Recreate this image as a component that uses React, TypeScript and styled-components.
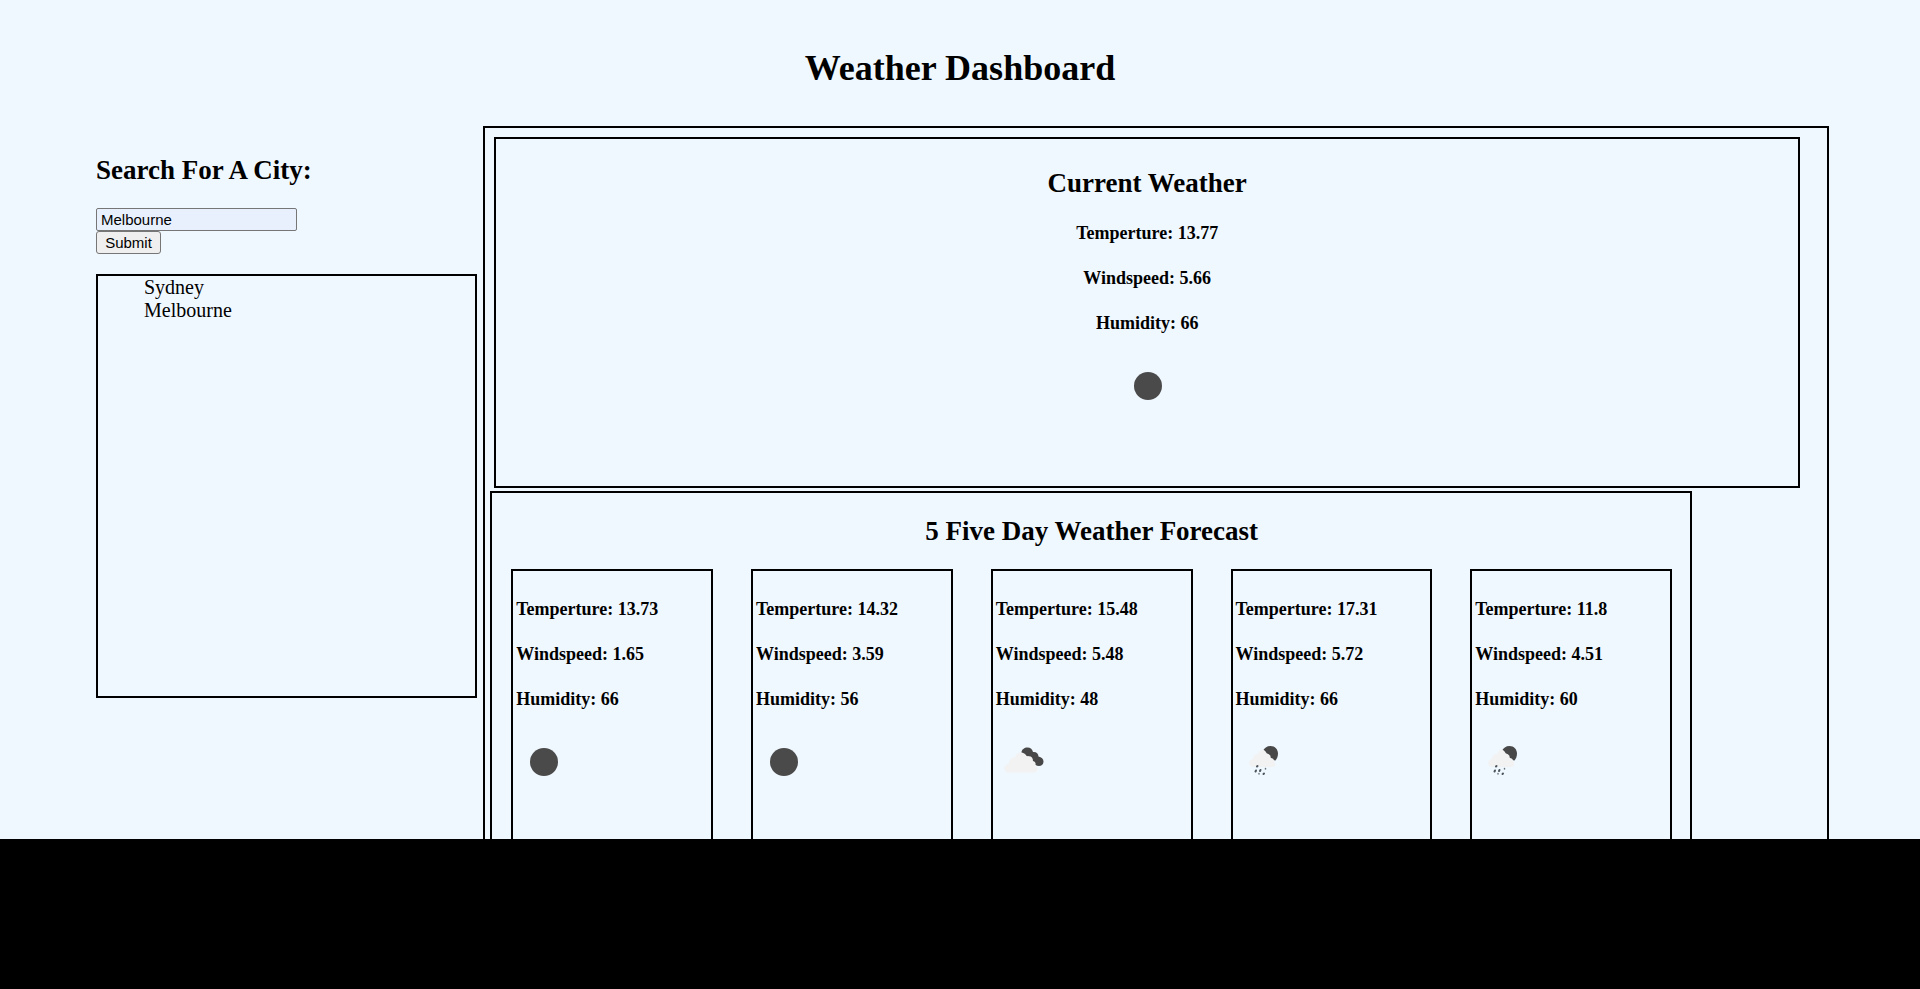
import React, { useState } from "react";
import styled, { createGlobalStyle } from "styled-components";

const GlobalStyle = createGlobalStyle`
  body {
    margin: 0;
    background: #000;
    color: #000;
    font-family: "Liberation Serif", "Times New Roman", serif;
    font-size: 20px;
    line-height: 23px;
  }
`;

const Page = styled.div`
  display: flex;
  flex-direction: column;
  min-height: 100vh;
`;

const Sheet = styled.div`
  flex: 1;
  display: flex;
  flex-direction: column;
  background: aliceblue;
`;

const Title = styled.h1`
  margin: 0;
  padding: 48px 0 38px;
  font-size: 36px;
  line-height: 40px;
  text-align: center;
`;

const SectionTitle = styled.h2`
  margin: 0;
  font-size: 27px;
  line-height: 30px;
`;

const Columns = styled.main`
  flex: 1;
  display: grid;
  grid-template-columns: 22% 1fr;
  gap: 6px;
  padding: 0 91px 0 5%;
`;

const SearchColumn = styled.section`
  padding-top: 29px;
`;

const SearchForm = styled.form`
  display: flex;
  flex-direction: column;
  align-items: flex-start;
  margin: 23px 0 20px;
`;

const CityInput = styled.input`
  box-sizing: border-box;
  width: 201px;
  height: 23px;
  padding: 1px 4px;
  border: 1px solid #767676;
  border-radius: 2px;
  background: #e8f0fe;
  color: #000;
  font: 15px "Liberation Sans", Arial, sans-serif;
`;

const SubmitButton = styled.button`
  box-sizing: border-box;
  width: 65px;
  height: 23px;
  padding: 0;
  border: 1px solid #767676;
  border-radius: 3px;
  background: #efefef;
  color: #000;
  font: 15px "Liberation Sans", Arial, sans-serif;
`;

const History = styled.ul`
  box-sizing: border-box;
  min-height: 424px;
  margin: 0;
  padding: 0 0 0 46px;
  border: 2px solid #000;
  list-style: none;
`;

const WeatherColumn = styled.div`
  display: flex;
  flex-direction: column;
  border: 2px solid #000;
  border-bottom: 0;
`;

const Current = styled.section`
  box-sizing: border-box;
  min-height: 351px;
  margin: 9px 2% 3px 9px;
  padding-top: 29px;
  border: 2px solid #000;
  text-align: center;
`;

const Forecast = styled.section`
  flex: 1;
  display: flex;
  flex-direction: column;
  margin: 0 135px 0 5px;
  padding: 23px 18px 0 19px;
  border: 2px solid #000;
  border-bottom: 0;
  text-align: center;
`;

const Days = styled.div`
  flex: 1;
  display: grid;
  grid-template-columns: repeat(5, 1fr);
  gap: 38px;
  margin-top: 23px;
  text-align: left;
`;

const Day = styled.article`
  padding: 3px 3px 22px;
  border: 2px solid #000;
  border-bottom: 0;
`;

const Reading = styled.h4`
  margin: 25px 0;
  font-size: 18px;
  line-height: 20px;
`;

const Icon = styled.svg`
  display: inline-block;
  width: 55px;
  height: 55px;
`;

const Band = styled.footer`
  height: 150px;
  background: #000;
`;

type Sky = "clear" | "clouds" | "rain";

const SkyIcon = ({ sky }: { sky: Sky }) => (
  <Icon viewBox="0 0 55 55" role="img" aria-label={sky}>
    {sky === "clear" && <circle cx="28" cy="28" r="14" fill="#4a4a4a" />}
    {sky === "clouds" && (
      <>
        <path
          d="M25.500 18.500c0-3 3-5 6-5 3 0 5 2 5.500 4.500 3-.5 5.500 1.500 5.500 4.500 3 .5 5 2.500 5 5 0 3-2 4.500-4.500 4.500-3 0-4-1.500-5.500-3.500-2-1-2-5-5-6-3-1-6-1-7-4z"
          fill="#484848"
        />
        <path
          d="M12 38.500c-5-1-5-8 1-9 0-5 3-6 6-6 1-6 9-7 12-1 4-1 6 1 6 4.500 3 1 3 3 2 5 4 1 3 6.500-1 6.500z"
          fill="#f2f2f2"
        />
      </>
    )}
    {sky === "rain" && (
      <>
        <path
          d="M27 17c1-3 4-5 7.500-5 4.500 0 7.500 3.500 7.500 7.500 0 3-1 5-2.500 7-2 0-4-1-5-3-2-1-1-4-3.500-4-2 0-4-.5-4-2.500z"
          fill="#484848"
        />
        <path
          d="M17 33c-5-1-5-7 0-8 0-3 2-5 5-5 2-6 7-5 9 0 3 0 4 2 3.500 4 3 0 4 2.500 3.500 4 3 2 1 5-2 5z"
          fill="#f2f2f2"
        />
        <g stroke="#4f565e" strokeWidth="2" strokeLinecap="round">
          <path d="M21.500 32l-.5.5M20 36.500l-.5 1M24.500 36l-.5 1M28 39.500l-.5.5" />
          <path d="M29.500 34.500v.5M23 39.500v.5" strokeWidth="1.500" opacity=".8" />
        </g>
      </>
    )}
  </Icon>
);

type Weather = { temp: string; wind: string; humidity: string; sky: Sky };

const current: Weather = { temp: "13.77", wind: "5.66", humidity: "66", sky: "clear" };

const days: Weather[] = [
  { temp: "13.73", wind: "1.65", humidity: "66", sky: "clear" },
  { temp: "14.32", wind: "3.59", humidity: "56", sky: "clear" },
  { temp: "15.48", wind: "5.48", humidity: "48", sky: "clouds" },
  { temp: "17.31", wind: "5.72", humidity: "66", sky: "rain" },
  { temp: "11.8", wind: "4.51", humidity: "60", sky: "rain" },
];

const Readings = ({ weather }: { weather: Weather }) => (
  <>
    <Reading>Temperture: {weather.temp}</Reading>
    <Reading>Windspeed: {weather.wind}</Reading>
    <Reading>Humidity: {weather.humidity}</Reading>
    <SkyIcon sky={weather.sky} />
  </>
);

export default function App() {
  const [city, setCity] = useState("Melbourne");
  const [cities, setCities] = useState(["Sydney", "Melbourne"]);

  const submit = (event: React.FormEvent) => {
    event.preventDefault();
    if (city.trim()) setCities([...cities, city.trim()]);
  };

  return (
    <Page>
      <GlobalStyle />
      <Sheet>
        <Title>Weather Dashboard</Title>
        <Columns>
          <SearchColumn>
            <SectionTitle>
              <label htmlFor="city">Search For A City:</label>
            </SectionTitle>
            <SearchForm onSubmit={submit}>
              <CityInput id="city" value={city} onChange={(e) => setCity(e.target.value)} />
              <SubmitButton type="submit">Submit</SubmitButton>
            </SearchForm>
            <History>
              {cities.map((name, i) => (
                <li key={i}>{name}</li>
              ))}
            </History>
          </SearchColumn>
          <WeatherColumn>
            <Current>
              <SectionTitle>Current Weather</SectionTitle>
              <Readings weather={current} />
            </Current>
            <Forecast>
              <SectionTitle>5 Five Day Weather Forecast</SectionTitle>
              <Days>
                {days.map((day, i) => (
                  <Day key={i}>
                    <Readings weather={day} />
                  </Day>
                ))}
              </Days>
            </Forecast>
          </WeatherColumn>
        </Columns>
      </Sheet>
      <Band />
    </Page>
  );
}
